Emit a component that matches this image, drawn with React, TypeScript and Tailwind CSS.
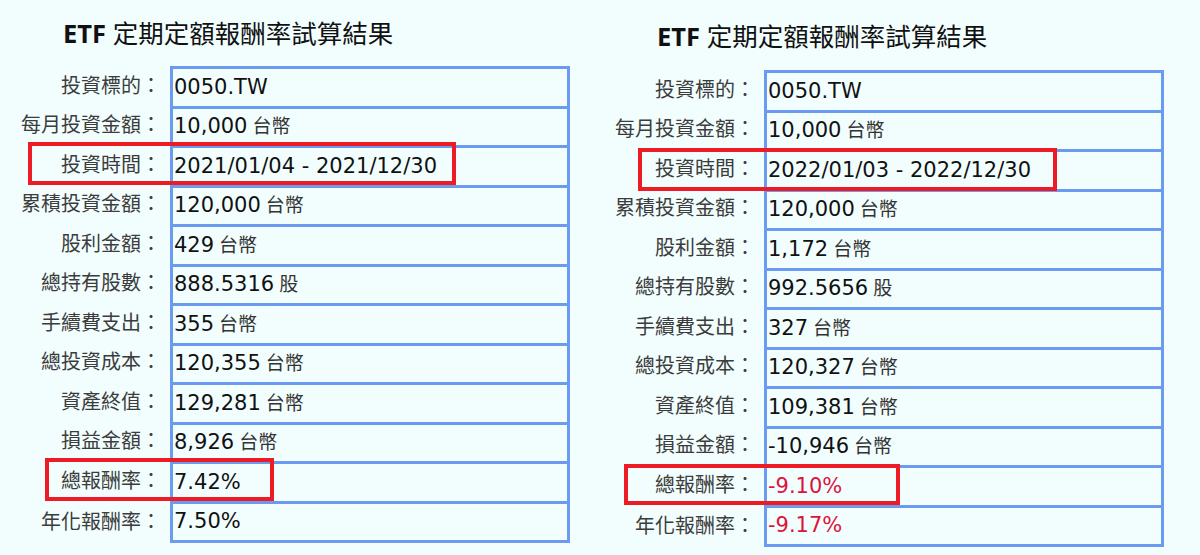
import React from "react";

type Row = { label: string; value: string; unit?: string; neg?: boolean };

const leftRows: Row[] = [
  { label: "投資標的：", value: "0050.TW" },
  { label: "每月投資金額：", value: "10,000", unit: "台幣" },
  { label: "投資時間：", value: "2021/01/04 - 2021/12/30" },
  { label: "累積投資金額：", value: "120,000", unit: "台幣" },
  { label: "股利金額：", value: "429", unit: "台幣" },
  { label: "總持有股數：", value: "888.5316", unit: "股" },
  { label: "手續費支出：", value: "355", unit: "台幣" },
  { label: "總投資成本：", value: "120,355", unit: "台幣" },
  { label: "資產終值：", value: "129,281", unit: "台幣" },
  { label: "損益金額：", value: "8,926", unit: "台幣" },
  { label: "總報酬率：", value: "7.42%" },
  { label: "年化報酬率：", value: "7.50%" },
];

const rightRows: Row[] = [
  { label: "投資標的：", value: "0050.TW" },
  { label: "每月投資金額：", value: "10,000", unit: "台幣" },
  { label: "投資時間：", value: "2022/01/03 - 2022/12/30" },
  { label: "累積投資金額：", value: "120,000", unit: "台幣" },
  { label: "股利金額：", value: "1,172", unit: "台幣" },
  { label: "總持有股數：", value: "992.5656", unit: "股" },
  { label: "手續費支出：", value: "327", unit: "台幣" },
  { label: "總投資成本：", value: "120,327", unit: "台幣" },
  { label: "資產終值：", value: "109,381", unit: "台幣" },
  { label: "損益金額：", value: "-10,946", unit: "台幣" },
  { label: "總報酬率：", value: "-9.10%", neg: true },
  { label: "年化報酬率：", value: "-9.17%", neg: true },
];

const cjk = "font-['Noto_Sans','Noto_Sans_CJK_TC',sans-serif]";

function Table({ rows }: { rows: Row[] }) {
  return (
    <div className="flex flex-col">
      {rows.map((r, i) => (
        <div key={i} className="flex items-stretch">
          <div
            className={`w-[170px] pr-[9px] flex items-center justify-end text-[20px] leading-none text-[#3c3c3c] ${cjk}`}
          >
            {r.label}
          </div>
          <div
            className={`w-[400px] h-[39.5px] border-x-[3px] border-t-[3px] border-[#6b9bf0] flex items-center pl-[1px] ${
              i === rows.length - 1 ? "border-b-[3px] h-[42.5px]" : ""
            }`}
          >
            <span
              className={`text-[21px] leading-none font-['DejaVu_Sans','Noto_Sans_CJK_TC',sans-serif] ${
                r.neg ? "text-[#dc143c]" : "text-[#111]"
              }`}
            >
              {r.value}
            </span>
            {r.unit && (
              <span className={`ml-[5px] text-[19px] leading-none text-[#333] ${cjk}`}>{r.unit}</span>
            )}
          </div>
        </div>
      ))}
    </div>
  );
}

function Title() {
  return (
    <div className={`h-[36px] leading-[36px] text-[25.5px] text-[#111] ${cjk}`}>
      <span className="font-bold">ETF</span> 定期定額報酬率試算結果
    </div>
  );
}

function Mark({ cls }: { cls: string }) {
  return <div className={`absolute border-[4px] border-[#ed1c24] ${cls}`} />;
}

export default function App() {
  return (
    <div className="w-[1200px] h-[555px] bg-[#f2fefe] flex overflow-hidden">
      <div className="relative w-[594px] pt-[15px]">
        <div className="pl-[63px] mb-[15px]">
          <Title />
        </div>
        <Table rows={leftRows} />
        <Mark cls="left-[28px] top-[142px] w-[428px] h-[43px]" />
        <Mark cls="left-[45px] top-[458px] w-[229px] h-[43px]" />
      </div>
      <div className="relative w-[606px] pt-[18px]">
        <div className="pl-[63px] mb-[16px]">
          <Title />
        </div>
        <Table rows={rightRows} />
        <Mark cls="left-[44px] top-[148px] w-[419px] h-[43px]" />
        <Mark cls="left-[30px] top-[464px] w-[276px] h-[41px]" />
      </div>
    </div>
  );
}
